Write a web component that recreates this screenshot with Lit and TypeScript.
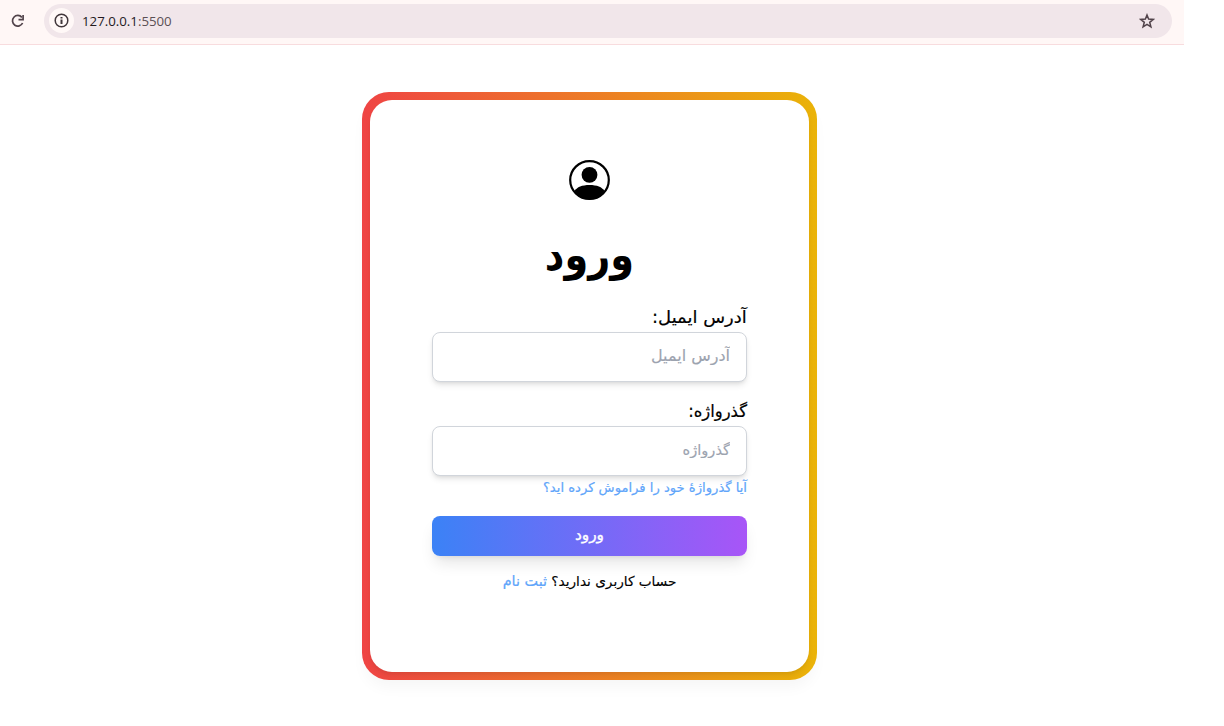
import { LitElement, html, css } from "lit";
import { customElement } from "lit/decorators.js";

@customElement("browser-bar")
class BrowserBar extends LitElement {
  static styles = css`
    :host { display: flex; align-items: center; box-sizing: border-box; width: 1184px; height: 45px; padding: 0 12px 3px 10px; background: #fff7f6; border-bottom: 1px solid #f8dcde; }
    .reload { width: 16px; height: 16px; flex: none; margin-right: 18px; }
    .address { flex: 1; height: 34px; border-radius: 17px; background: #f1e6ea; display: flex; align-items: center; padding: 0 17px 0 5px; box-sizing: border-box; }
    .info { width: 25px; height: 25px; border-radius: 50%; background: #fff8f7; display: grid; place-items: center; margin-right: 8px; }
    .url { flex: 1; padding-top: 1px; font: 13.25px/18px "Open Sans", sans-serif; color: #231a1e; }
    .port { color: #5b5054; }
    svg { display: block; }
  `;
  render() {
    return html`
      <svg class="reload" viewBox="0 0 16 16" fill="none" stroke="#51434a" stroke-width="1.7"><path d="M11.9 4.4A5.3 5.3 0 1 0 12.6 10"/><path d="M13.1 2.1v4.6H8.5"/></svg>
      <div class="address">
        <div class="info"><svg width="15" height="15" viewBox="0 0 15 15"><circle cx="7.5" cy="7.5" r="6.3" fill="none" stroke="#40363a" stroke-width="1.5"/><path fill="#40363a" d="M6.5 4h2v1.5h-2zM6.5 6.6h2V11h-2z"/></svg></div>
        <div class="url">127.0.0.1<span class="port">:5500</span></div>
        <svg width="16" height="16" viewBox="0 0 16 16" fill="none" stroke="#51434a" stroke-width="1.5"><path d="M8 2 9.6 6.1l4.6.3-3.5 2.9 1.2 4.5L8 11.3l-3.9 2.5 1.2-4.5L1.8 6.4l4.6-.3z"/></svg>
      </div>`;
  }
}

@customElement("app-root")
class AppRoot extends LitElement {
  static styles = css`
    :host { display: block; width: 1224px; height: 726px; overflow: hidden; background: #fff; font-family: "DejaVu Sans", sans-serif; color: #000; }
    * { box-sizing: border-box; }
    main { width: 1179px; padding-top: 47px; display: flex; justify-content: center; }
    .frame { width: 455px; height: 588px; padding: 8px; border-radius: 27px; background: linear-gradient(to right, #ef4444, #eab308); box-shadow: 0 10px 15px -3px rgba(0,0,0,.04); }
    .card { height: 572px; border-radius: 22px; background: #fff; padding: 60px 62px 0; display: flex; flex-direction: column; box-shadow: 0 4px 6px -1px rgba(0,0,0,.08), 0 2px 4px -2px rgba(0,0,0,.05); }
    .avatar { width: 41px; height: 41px; align-self: center; flex: none; }
    h1 { margin: 29px 0 24px; height: 50px; font-size: 45px; line-height: 50px; font-weight: 700; text-align: center; }
    h1 span { display: inline-block; transform: scale(.85, .97); }
    label { display: block; height: 28px; padding-top: 1px; font-size: 17px; line-height: 24px; white-space: nowrap; -webkit-text-stroke: .2px currentColor; }
    label span { display: inline-block; transform-origin: right center; transform: scaleX(1.055); }
    label.password span { transform: scaleX(.965); }
    input { display: block; width: 315px; height: 50px; padding: 0 16px 3px; border: 1px solid #d1d5db; border-radius: 8px; background: #fff; font: 16px "DejaVu Sans", sans-serif; box-shadow: 0 4px 6px -1px rgba(0,0,0,.1), 0 2px 4px -2px rgba(0,0,0,.1); }
    #password { font-size: 14.6px; padding-bottom: 4px; }
    input::placeholder { color: #9ca3af; opacity: 1; -webkit-text-stroke: .15px currentColor; }
    .password { margin-top: 16px; }
    a { color: #60a5fa; text-decoration: none; white-space: nowrap; -webkit-text-stroke: .2px currentColor; }
    .forgot { height: 24px; font-size: 13.13px; line-height: 24px; }
    button { margin-top: 16px; width: 315px; height: 40px; padding: 0 6px 2px; border: 0; border-radius: 8px; color: #fff; font: 15.3px/36px "DejaVu Sans", sans-serif; -webkit-text-stroke: .35px currentColor; background: linear-gradient(to right, #3b82f6, #a855f7); box-shadow: 0 10px 15px -3px rgba(0,0,0,.1), 0 4px 6px -4px rgba(0,0,0,.1); }
    .signup { margin-top: 13px; height: 24px; font-size: 13.65px; line-height: 24px; text-align: center; white-space: nowrap; }
    .signup span { -webkit-text-stroke: .15px currentColor; }
    .signup a { font-size: 14.4px; }
  `;
  render() {
    return html`
      <browser-bar></browser-bar>
      <main>
        <div class="frame">
          <form class="card" dir="rtl">
            <svg class="avatar" viewBox="0 0 41 41"><ellipse cx="20.5" cy="20" rx="19.3" ry="18.9" fill="#fff" stroke="#000" stroke-width="2.2"/><circle cx="20.5" cy="14.8" r="7.9"/><path d="M5.5 31C8 27 13 25 20.5 25S33 27 35.5 31C31 37 26 39.4 20.5 39.4S10 37 5.5 31Z"/></svg>
            <h1><span>ورود</span></h1>
            <label for="email"><span>آدرس ایمیل:</span></label>
            <input id="email" type="email" dir="rtl" placeholder="آدرس ایمیل">
            <label class="password" for="password"><span>گذرواژه:</span></label>
            <input id="password" type="password" dir="rtl" placeholder="گذرواژه">
            <div class="forgot"><a href="#">آیا گذرواژهٔ خود را فراموش کرده اید؟</a></div>
            <button type="button">ورود</button>
            <div class="signup"><span>حساب کاربری ندارید؟</span> <a href="#">ثبت نام</a></div>
          </form>
        </div>
      </main>`;
  }
}
